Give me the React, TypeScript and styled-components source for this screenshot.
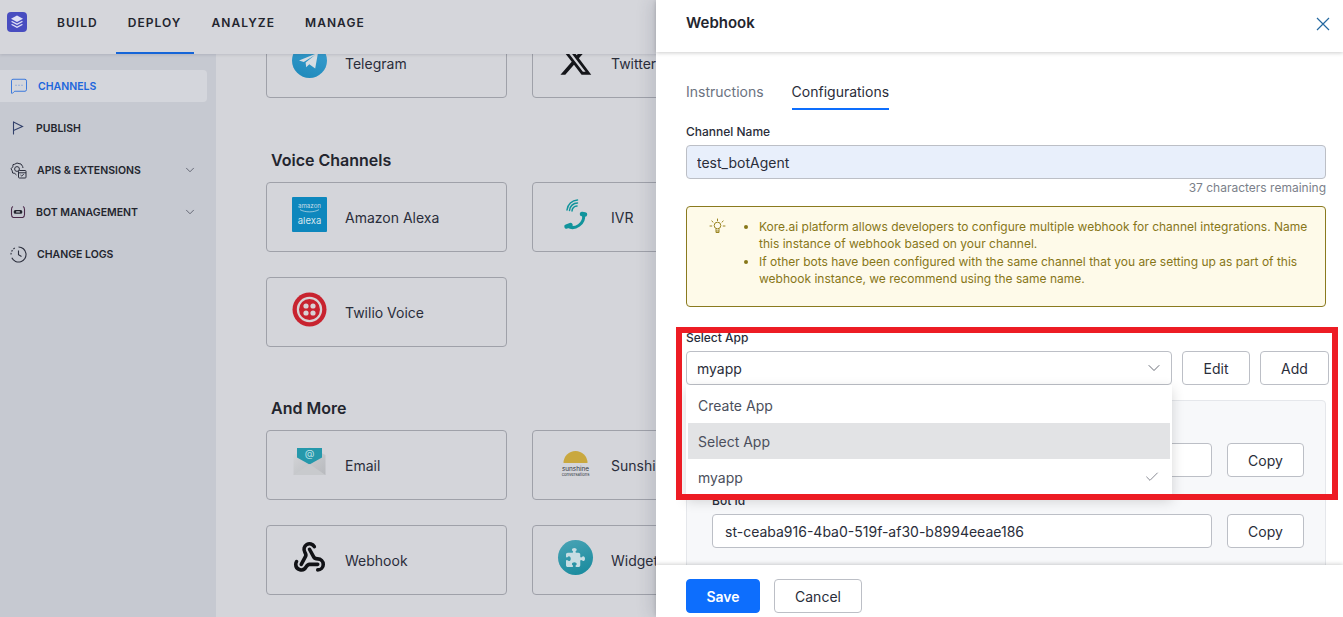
import React from "react";
import styled, { createGlobalStyle } from "styled-components";
import { ChevronDown, Check, Webhook, MessageSquareMore, Settings } from "lucide-react";
import { FaPuzzlePiece } from "react-icons/fa6";

const Global = createGlobalStyle`
  html, body { margin: 0; padding: 0; height: 100%; overflow: hidden; }
  body { font-family: Inter, "Liberation Sans", sans-serif; }
  * { box-sizing: border-box; }
`;

const Page = styled.div`
  position: relative;
  width: 1343px;
  height: 617px;
  overflow: hidden;
  background: #d4d5da;
  display: flex;
  flex-direction: column;
`;

const TopBar = styled.header`
  height: 54px;
  flex: none;
  display: flex;
  align-items: stretch;
  background: #d5d6db;
  box-shadow: 0 1px 3px rgba(40, 44, 60, 0.14);
  position: relative;
  z-index: 2;
  padding-left: 7px;
`;

const LogoBox = styled.div`
  width: 20px;
  height: 20px;
  margin-top: 12px;
  margin-right: 18px;
  border-radius: 4px;
  background: #484dc0;
  display: flex;
  align-items: center;
  justify-content: center;
`;

const TopTab = styled.div<{ $active?: boolean }>`
  padding: 15px 12px 0;
  margin-right: 6px;
  width: ${(p) => p.$width};
  font-size: 12px;
  line-height: 15px;
  font-weight: 600;
  letter-spacing: 1.05px;
  color: #23252e;
  border-bottom: 2px solid ${(p) => (p.$active ? "#1565d8" : "transparent")};
`;

const Main = styled.div`
  flex: 1;
  display: flex;
  min-height: 0;
`;

const Sidebar = styled.nav`
  width: 216px;
  flex: none;
  background: #c6c9d1;
  padding-top: 16px;
  display: flex;
  flex-direction: column;
  gap: 10px;
`;

const NavItem = styled.div<{ $active?: boolean }>`
  width: 207px;
  height: 32px;
  display: flex;
  align-items: center;
  padding-left: 10px;
  gap: 10px;
  border-radius: 0 4px 4px 0;
  background: ${(p) => (p.$active ? "#d4d6dc" : "transparent")};
  color: ${(p) => (p.$active ? "#1c66dc" : "#23252e")};
  font-size: 10.5px;
  font-weight: 600;
  letter-spacing: 0;
  svg { flex: none; }
`;

const NavLabel = styled.span`
  flex: 1;
`;

const NavChevron = styled.span`
  display: flex;
  margin-right: 10px;
  color: #3d4150;
`;

const Content = styled.main`
  flex: 1;
  min-width: 0;
  overflow: hidden;
  padding-left: 50px;
`;

const Section = styled.h2<{ $gap: number }>`
  margin: ${(p) => p.$gap}px 0 10px 5px;
  font-size: 16px;
  line-height: 24px;
  font-weight: 600;
  color: #23252e;
`;

const CardGrid = styled.div<{ $offset?: number }>`
  display: grid;
  grid-template-columns: 241px 241px;
  gap: 25px;
  margin-top: ${(p) => p.$offset ?? 0}px;
`;

const Card = styled.div`
  height: 70px;
  display: flex;
  align-items: center;
  border: 1px solid #9fa1a9;
  border-radius: 4px;
  padding-left: 25px;
  font-size: 14px;
  color: #2a2d3a;
  white-space: nowrap;
`;

const CardIcon = styled.div`
  width: 35px;
  height: 35px;
  margin-right: 18px;
  margin-bottom: 5px;
  flex: none;
  display: flex;
  align-items: center;
  justify-content: center;
`;

const WidgetDisc = styled.div`
  width: 35px;
  height: 35px;
  border-radius: 50%;
  background: linear-gradient(160deg, #4ba4b6, #15899c);
  color: #c7dde3;
  display: flex;
  align-items: center;
  justify-content: center;
`;

const Drawer = styled.aside`
  position: absolute;
  top: 0;
  right: 0;
  bottom: 0;
  width: 687px;
  background: #fff;
  box-shadow: -6px 0 14px rgba(50, 55, 80, 0.13);
  display: flex;
  flex-direction: column;
  z-index: 5;
`;

const DrawerHead = styled.div`
  height: 52px;
  flex: none;
  display: flex;
  justify-content: space-between;
  padding: 13px 11px 0 30px;
  box-shadow: 0 1px 4px rgba(0, 0, 0, 0.2);
  position: relative;
  z-index: 1;
`;

const DrawerTitle = styled.h1`
  margin: 0;
  font-size: 15px;
  line-height: 20px;
  font-weight: 600;
  color: #23252e;
`;

const DrawerBody = styled.div`
  flex: 1;
  min-height: 0;
  overflow: hidden;
  padding: 30px 17px 0 30px;
`;

const Tabs = styled.div`
  display: flex;
  gap: 28px;
`;

const Tab = styled.div<{ $active?: boolean }>`
  height: 28px;
  font-size: 14px;
  line-height: 20px;
  color: ${(p) => (p.$active ? "#2a2d3a" : "#6b7280")};
  border-bottom: 2px solid ${(p) => (p.$active ? "#0d6efd" : "transparent")};
`;

const Label = styled.label<{ $top: number }>`
  display: block;
  margin: ${(p) => p.$top}px 0 5px;
  font-size: 12px;
  line-height: 16px;
  font-weight: 500;
  color: #2a2d3a;
`;

const TextInput = styled.input<{ $filled?: boolean }>`
  flex: 1;
  min-width: 0;
  width: 100%;
  height: 34px;
  padding: 0 ${(p) => (p.$filled ? "10px" : "12px")};
  border: 1px solid #bcbfc6;
  border-radius: 4px;
  background: ${(p) => (p.$filled ? "#e8effb" : "#fff")};
  font: 400 14px Inter, sans-serif;
  color: #2a2d3a;
  outline: none;
`;

const Helper = styled.div`
  margin-top: 1px;
  text-align: right;
  font-size: 12px;
  line-height: 16px;
  color: #7b7f8a;
`;

const Notice = styled.div`
  margin-top: 10px;
  height: 101px;
  display: flex;
  padding: 11px 15px 0 22px;
  background: #fefae9;
  border: 1px solid #8a7a1f;
  border-radius: 4px;
  color: #877618;
`;

const NoticeList = styled.ul`
  margin: 0;
  padding: 0 0 0 33px;
  font-size: 12px;
  line-height: 17.4px;
`;

const SelectRow = styled.div`
  display: flex;
  gap: 10px;
  width: 643px;
`;

const SelectWrap = styled.div`
  position: relative;
  width: 486px;
  flex: none;
`;

const SelectBox = styled.div`
  height: 34px;
  display: flex;
  align-items: center;
  justify-content: space-between;
  padding: 0 7px 0 10px;
  border: 1px solid #bcbfc6;
  border-radius: 4px;
  font-size: 14px;
  color: #2a2d3a;
  svg { color: #4b4f5c; }
`;

const Menu = styled.div`
  position: absolute;
  top: 34px;
  left: 0;
  right: 0;
  padding: 2px;
  background: #fff;
  box-shadow: 0 4px 12px rgba(0, 0, 0, 0.16);
  z-index: 3;
`;

const MenuItem = styled.div<{ $hover?: boolean }>`
  height: 36px;
  display: flex;
  align-items: center;
  justify-content: space-between;
  padding: 0 10px;
  font-size: 14px;
  color: #4b4f5c;
  background: ${(p) => (p.$hover ? "#e2e3e5" : "transparent")};
`;

const Button = styled.button<{ $w: number }>`
  width: ${(p) => p.$w}px;
  height: 34px;
  flex: none;
  border: 1px solid #bcbfc6;
  border-radius: 4px;
  background: #fff;
  font: 400 14px Inter, sans-serif;
  color: #2a2d3a;
  padding: 0;
`;

const PrimaryButton = styled(Button)`
  background: #0d6efd;
  border-color: #0d6efd;
  color: #fff;
  font-weight: 600;
`;

const InnerPanel = styled.div`
  margin-top: 15px;
  padding: 21px 21px 40px 25px;
  background: #f7f8fa;
  border: 1px solid #e5e7eb;
  border-radius: 4px;
`;

const CopyRow = styled.div`
  display: flex;
  gap: 15px;
`;

const DrawerFoot = styled.div`
  height: 52px;
  flex: none;
  display: flex;
  gap: 14px;
  padding: 14px 0 0 30px;
  background: #fff;
  box-shadow: 0 -1px 4px rgba(0, 0, 0, 0.18);
  position: relative;
  z-index: 1;
`;

const Highlight = styled.div`
  position: absolute;
  left: 20px;
  top: 327px;
  width: 662px;
  height: 173px;
  border: 6px solid #ed1c24;
  pointer-events: none;
  z-index: 4;
`;

const ink = "#2b2e3c";

const LogoIcon = () => (
  <svg width="14" height="14" viewBox="0 0 14 14" fill="#dfe0f5">
    <path d="M7 .6 13 3.8 7 7 1 3.8z" />
    <path d="M2.2 6 7 8.6 11.8 6 13 6.8 7 10 1 6.8z" />
    <path d="M2.2 9 7 11.6 11.8 9 13 9.8 7 13 1 9.8z" />
  </svg>
);

const FlagIcon = () => (
  <svg width="16" height="16" viewBox="0 0 16 16" fill="none" stroke="#33416b" strokeWidth="1.1">
    <path d="M3.5 1.5V14.5" />
    <path d="M3.5 2 12.5 6.5 3.5 10.5" />
  </svg>
);

const ApiIcon = () => (
  <svg width="17" height="17" viewBox="0 0 17 17" fill="none" stroke={ink} strokeWidth="1">
    <path d="M7 1 9 1.6 11 2 12.6 4.4 13 6M7 1 4.8 2.2 3 2.6 2.8 4.8 1 6.8 2.2 8.8 2.6 11 4.8 11.4 6.5 13" />
    <circle cx="7" cy="7" r="2.4" />
    <rect x="8.5" y="8.5" width="7.5" height="7.5" rx=".8" fill="#c6c9d1" />
    <path d="M8.5 10.8H16M10.5 13l1.2 1.1 2-2" />
  </svg>
);

const BotIcon = () => (
  <svg width="16" height="16" viewBox="0 0 16 16" fill="none">
    <path d="M3 2.5C1.8 3 1.5 4 1.5 5.5v5C1.5 12 2 13 3.2 13.5h9.6C14 13 14.5 12 14.5 10.5v-5C14.5 4 14.2 3 13 2.5" stroke="#4b2a4a" strokeWidth="1.1" />
    <rect x="3.6" y="6" width="8.8" height="3.8" rx="1.9" fill="#23252e" />
    <rect x="6" y="7.2" width="4" height="1.4" rx=".7" fill="#c6c9d1" />
  </svg>
);

const ClockIcon = () => (
  <svg width="17" height="17" viewBox="0 0 17 17" fill="none" stroke={ink} strokeWidth="1.1">
    <path d="M8.5 1a7.5 7.5 0 1 1-6.7 10.8" />
    <path d="M1 8.5a7.5 7.5 0 0 1 5-7" strokeDasharray="1.6 1.4" />
    <path d="M8.5 4.5v4.2l3 1.8" />
  </svg>
);

const TelegramIcon = () => (
  <svg width="35" height="35" viewBox="0 0 35 35">
    <defs>
      <linearGradient id="tg" x1="0.7" y1="0" x2="0.3" y2="1">
        <stop offset="0" stopColor="#3a9ed0" />
        <stop offset="1" stopColor="#1f8abb" />
      </linearGradient>
    </defs>
    <circle cx="17.5" cy="17.5" r="17.5" fill="url(#tg)" />
    <path d="M7 17.5 26 9.8 23.2 25.5 17.3 21.3 14.2 24.2 13.6 19.5 23 12 11.8 18.9z" fill="#d6dde2" />
  </svg>
);

const XIcon = () => (
  <svg width="35" height="35" viewBox="0 0 24 24" fill="#15161a">
    <path d="M18.244 2.25h3.308l-7.227 8.26 8.502 11.24H16.17l-5.214-6.817L4.99 21.75H1.68l7.73-8.835L1.254 2.25H8.08l4.713 6.231zm-1.161 17.52h1.833L7.084 4.126H5.117z" />
  </svg>
);

const AlexaIcon = () => (
  <svg width="35" height="35" viewBox="0 0 35 35">
    <rect width="35" height="35" rx="1" fill="#0d87bd" />
    <text x="17.5" y="11" textAnchor="middle" fontSize="6.2" fontFamily="Inter, sans-serif" fill="#c9dfe9">amazon</text>
    <path d="M8 12.6c5 3 14 3 19 0" fill="none" stroke="#c9dfe9" strokeWidth=".7" />
    <text x="17.5" y="27" textAnchor="middle" fontSize="9.5" fontFamily="Inter, sans-serif" fill="#d5e6ee">alexa</text>
  </svg>
);

const IvrIcon = () => (
  <svg width="35" height="35" viewBox="0 0 35 35" fill="none" stroke="#11949c">
    <path d="M10 29.5C17 33 27 27 25.5 17.5" strokeWidth="3" />
    <path d="M8.5 29.5 12.5 28M24 17l3 .5" strokeWidth="4.5" strokeLinecap="round" />
    <path d="M14 14a5 5 0 0 1 5-5M11.5 13.5a8 8 0 0 1 8-7.5M9 13a11 11 0 0 1 10.5-10" strokeWidth="1.5" strokeLinecap="round" />
  </svg>
);

const TwilioIcon = () => (
  <svg width="35" height="35" viewBox="0 0 35 35">
    <circle cx="17.5" cy="17.5" r="17" fill="#c8232f" />
    <circle cx="17.5" cy="17.5" r="11.6" fill="none" stroke="#d8d2d5" strokeWidth="2.2" />
    <g fill="#d8d2d5">
      <circle cx="14" cy="14" r="2.6" />
      <circle cx="21" cy="14" r="2.6" />
      <circle cx="14" cy="21" r="2.6" />
      <circle cx="21" cy="21" r="2.6" />
    </g>
  </svg>
);

const EmailIcon = () => (
  <svg width="35" height="35" viewBox="0 0 35 35">
    <defs>
      <linearGradient id="env" x1="0" y1="0" x2="1" y2="1">
        <stop offset="0" stopColor="#d6d7da" />
        <stop offset="1" stopColor="#b7b9bd" />
      </linearGradient>
    </defs>
    <path d="M1.5 10 17.5 2 33.5 10V30H1.5z" fill="url(#env)" />
    <path d="M5 3h25v9.5l-12.5 7-12.5-7z" fill="#2598ab" />
    <text x="17.5" y="12" textAnchor="middle" fontSize="10" fontFamily="Inter, sans-serif" fill="#bfe0e6">@</text>
    <path d="M1.5 30 17.5 19 33.5 30z" fill="#c8cacd" />
  </svg>
);

const SunshineIcon = () => (
  <svg width="35" height="35" viewBox="0 0 35 35">
    <path d="M5.5 18a12 12 0 0 1 24 0z" fill="#c9a83f" />
    <text x="17.5" y="26" textAnchor="middle" fontSize="6.4" fontFamily="Inter, sans-serif" fill="#33353f">sunshine</text>
    <text x="17.5" y="31" textAnchor="middle" fontSize="4.2" fontFamily="Inter, sans-serif" fill="#33353f">conversations</text>
  </svg>
);

const BulbIcon = () => (
  <svg width="17" height="17" viewBox="0 0 17 17" fill="none" stroke="#9a8420" strokeWidth="1" style={{ flex: "none" }}>
    <circle cx="8.5" cy="7.5" r="3.3" />
    <path d="M7 11v3.5h3V11M7 13h3" />
    <path d="M8.5 1v1.6M2.8 3l1.2 1.1M14.2 3 13 4.1M1 8h1.8M14.2 8H16" strokeLinecap="round" />
  </svg>
);

const CloseIcon = () => (
  <svg width="18" height="18" viewBox="0 0 18 18" fill="none" stroke="#2468a0" strokeWidth="1.2" style={{ marginTop: 2 }}>
    <path d="M3 3 15 15M15 3 3 15" />
  </svg>
);

export default function App() {
  return (
    <Page>
      <Global />
      <TopBar>
        <LogoBox><LogoIcon /></LogoBox>
        <TopTab>BUILD</TopTab>
        <TopTab $active>DEPLOY</TopTab>
        <TopTab>ANALYZE</TopTab>
        <TopTab>MANAGE</TopTab>
      </TopBar>
      <Main>
        <Sidebar>
          <NavItem $active>
            <MessageSquareMore size={18} strokeWidth={1.1} />
            <NavLabel>CHANNELS</NavLabel>
          </NavItem>
          <NavItem><FlagIcon /><NavLabel>PUBLISH</NavLabel></NavItem>
          <NavItem>
            <ApiIcon /><NavLabel>APIS &amp; EXTENSIONS</NavLabel>
            <NavChevron><ChevronDown size={14} strokeWidth={1.2} /></NavChevron>
          </NavItem>
          <NavItem>
            <BotIcon /><NavLabel>BOT MANAGEMENT</NavLabel>
            <NavChevron><ChevronDown size={14} strokeWidth={1.2} /></NavChevron>
          </NavItem>
          <NavItem><ClockIcon /><NavLabel>CHANGE LOGS</NavLabel></NavItem>
        </Sidebar>
        <Content>
          <CardGrid $offset={-26}>
            <Card><CardIcon><TelegramIcon /></CardIcon>Telegram</Card>
            <Card><CardIcon><XIcon /></CardIcon>Twitter</Card>
          </CardGrid>
          <Section $gap={50}>Voice Channels</Section>
          <CardGrid>
            <Card><CardIcon><AlexaIcon /></CardIcon>Amazon Alexa</Card>
            <Card><CardIcon><IvrIcon /></CardIcon>IVR</Card>
            <Card><CardIcon><TwilioIcon /></CardIcon>Twilio Voice</Card>
          </CardGrid>
          <Section $gap={49}>And More</Section>
          <CardGrid>
            <Card><CardIcon><EmailIcon /></CardIcon>Email</Card>
            <Card><CardIcon><SunshineIcon /></CardIcon>Sunshine Conversations</Card>
            <Card>
              <CardIcon><Webhook size={33} strokeWidth={2.6} color="#111216" /></CardIcon>Webhook
            </Card>
            <Card>
              <CardIcon><WidgetDisc><FaPuzzlePiece size={19} /></WidgetDisc></CardIcon>Widget SDK
            </Card>
          </CardGrid>
        </Content>
      </Main>
      <Drawer>
        <DrawerHead>
          <DrawerTitle>Webhook</DrawerTitle>
          <CloseIcon />
        </DrawerHead>
        <DrawerBody>
          <Tabs>
            <Tab>Instructions</Tab>
            <Tab $active>Configurations</Tab>
          </Tabs>
          <Label $top={14}>Channel Name</Label>
          <TextInput $filled readOnly value="test_botAgent" />
          <Helper>37 characters remaining</Helper>
          <Notice>
            <BulbIcon />
            <NoticeList>
              <li>Kore.ai platform allows developers to configure multiple webhook for channel integrations. Name this instance of webhook based on your channel.</li>
              <li>If other bots have been configured with the same channel that you are setting up as part of this webhook instance, we recommend using the same name.</li>
            </NoticeList>
          </Notice>
          <Label $top={23}>Select App</Label>
          <SelectRow>
            <SelectWrap>
              <SelectBox>myapp<ChevronDown size={20} strokeWidth={1} /></SelectBox>
              <Menu>
                <MenuItem>Create App</MenuItem>
                <MenuItem $hover>Select App</MenuItem>
                <MenuItem>myapp<Check size={16} strokeWidth={1} /></MenuItem>
              </Menu>
            </SelectWrap>
            <Button $w={68}>Edit</Button>
            <Button $w={69}>Add</Button>
          </SelectRow>
          <InnerPanel>
            <Label $top={0}>Bot Name</Label>
            <CopyRow>
              <TextInput readOnly value="test_botAgent" />
              <Button $w={77}>Copy</Button>
            </CopyRow>
            <Label $top={16}>Bot Id</Label>
            <CopyRow>
              <TextInput readOnly value="st-ceaba916-4ba0-519f-af30-b8994eeae186" />
              <Button $w={77}>Copy</Button>
            </CopyRow>
          </InnerPanel>
        </DrawerBody>
        <DrawerFoot>
          <PrimaryButton $w={74}>Save</PrimaryButton>
          <Button $w={88}>Cancel</Button>
        </DrawerFoot>
        <Highlight />
      </Drawer>
    </Page>
  );
}
